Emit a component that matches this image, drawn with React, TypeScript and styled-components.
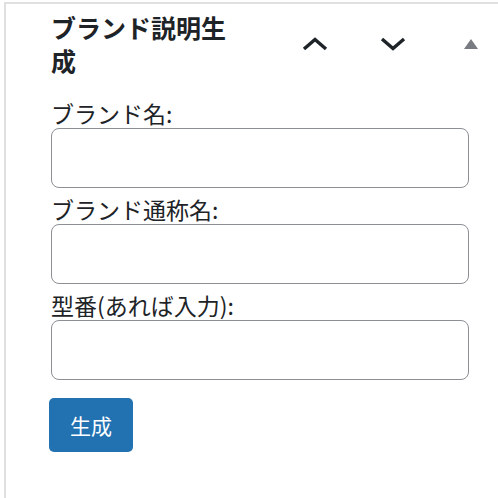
import React from 'react';
import styled, { createGlobalStyle } from 'styled-components';

const GlobalStyle = createGlobalStyle`
  html, body {
    margin: 0;
    padding: 0;
    background: #ffffff;
    overflow: hidden;
  }
  body {
    font-family: "Noto Sans CJK JP", "Noto Sans", sans-serif;
    color: #1d2327;
  }
`;

const Page = styled.div`
  padding: 2px 0 0 4px;
  height: 100vh;
  box-sizing: border-box;
`;

const Postbox = styled.div`
  border-top: 2px solid #e0e0e0;
  border-left: 2px solid #e0e0e0;
  height: 100%;
  box-sizing: border-box;
`;

const Header = styled.div`
  display: flex;
  align-items: center;
  padding: 7px 0 0 45px;
`;

const Title = styled.h2`
  flex: 0 1 190px;
  margin: 0;
  font-size: 25px;
  line-height: 33px;
  font-weight: 700;
  color: #1d2327;
`;

const Actions = styled.div`
  display: flex;
  align-items: center;
  margin-left: auto;
  gap: 42px;
  padding-right: 9px;
`;

const HandleButton = styled.button<{ $muted?: boolean }>`
  width: 36px;
  height: 36px;
  padding: 0;
  border: none;
  background: transparent;
  display: flex;
  align-items: center;
  justify-content: center;
  color: ${p => (p.$muted ? '#787c82' : '#1d2327')};
  cursor: pointer;
`;

const Inside = styled.div`
  padding: 22px 29px 0 45px;
`;

const Field = styled.div`
  margin-bottom: 7px;
`;

const Label = styled.label`
  display: block;
  font-size: 23px;
  line-height: 29px;
  color: #1d2327;
`;

const TextInput = styled.input`
  display: block;
  width: 100%;
  height: 60px;
  box-sizing: border-box;
  border: 1.5px solid #8c8f94;
  border-radius: 8px;
  background: #fff;
  font-size: 22px;
  padding: 0 12px;
`;

const SubmitButton = styled.button`
  margin: 11px 0 0 -2px;
  height: 54px;
  padding: 0 21px;
  border: none;
  border-radius: 5px;
  background: #2271b1;
  color: #ffffff;
  font-family: "Noto Sans CJK JP", sans-serif;
  font-size: 21px;
  line-height: 54px;
  cursor: pointer;
`;

const ChevronUp = () => (
  <svg width="26" height="14" viewBox="0 0 26 14">
    <polyline points="2,12 13,2.5 24,12" fill="none" stroke="currentColor" strokeWidth="3.4" />
  </svg>
);

const ChevronDown = () => (
  <svg width="26" height="14" viewBox="0 0 26 14">
    <polyline points="2,2 13,11.5 24,2" fill="none" stroke="currentColor" strokeWidth="3.4" />
  </svg>
);

const Triangle = () => (
  <svg width="14" height="10" viewBox="0 0 14 10">
    <polygon points="7,0 14,10 0,10" fill="currentColor" />
  </svg>
);

const fields = [
  { id: 'brand-name', label: 'ブランド名:' },
  { id: 'brand-alias', label: 'ブランド通称名:' },
  { id: 'model-number', label: '型番(あれば入力):' },
];

const App: React.FC = () => (
  <>
    <GlobalStyle />
    <Page>
      <Postbox>
        <Header>
          <Title>ブランド説明生成</Title>
          <Actions>
            <HandleButton aria-label="上へ移動">
              <ChevronUp />
            </HandleButton>
            <HandleButton aria-label="下へ移動">
              <ChevronDown />
            </HandleButton>
            <HandleButton $muted aria-label="パネルを切り替え">
              <Triangle />
            </HandleButton>
          </Actions>
        </Header>
        <Inside>
          {fields.map(f => (
            <Field key={f.id}>
              <Label htmlFor={f.id}>{f.label}</Label>
              <TextInput id={f.id} type="text" />
            </Field>
          ))}
          <SubmitButton type="button">生成</SubmitButton>
        </Inside>
      </Postbox>
    </Page>
  </>
);

export default App;
